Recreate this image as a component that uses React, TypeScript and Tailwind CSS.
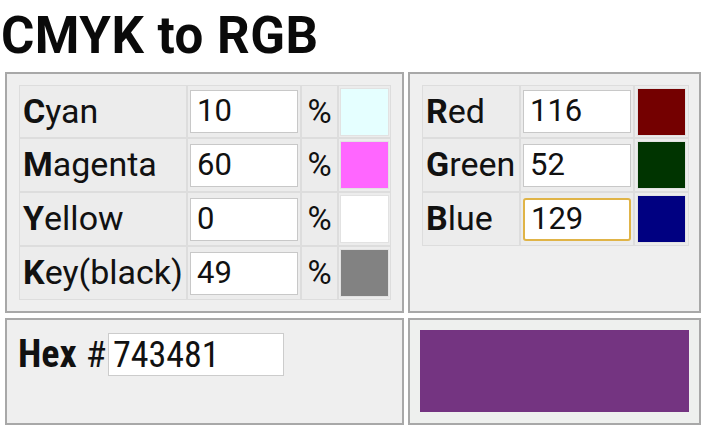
import React from "react";

const cmyk = [
  { first: "C", rest: "yan", value: "10", swatch: "#e5ffff" },
  { first: "M", rest: "agenta", value: "60", swatch: "#ff66ff" },
  { first: "Y", rest: "ellow", value: "0", swatch: "#ffffff" },
  { first: "K", rest: "ey(black)", value: "49", swatch: "#828282" },
];

const rgb = [
  { first: "R", rest: "ed", value: "116", swatch: "#740000", focus: false },
  { first: "G", rest: "reen", value: "52", swatch: "#003400", focus: false },
  { first: "B", rest: "lue", value: "129", swatch: "#000081", focus: true },
];

function Label({ first, rest }: { first: string; rest: string }) {
  return (
    <div className="bg-[#ececec] flex items-center pl-[3px] pb-[2px] text-[34px] leading-none text-[#111]">
      <b className="font-bold">{first}</b>
      {rest}
    </div>
  );
}

function Field({ value, focus }: { value: string; focus?: boolean }) {
  return (
    <div className="bg-[#ececec] flex items-center px-[2px]">
      <input
        readOnly
        value={value}
        className={
          "w-full h-[43px] bg-white px-[6px] text-[31px] text-[#111] outline-none " +
          (focus ? "border-2 border-[#e0b447] rounded-[3px]" : "border border-[#c8c8c8]")
        }
      />
    </div>
  );
}

function Swatch({ color }: { color: string }) {
  return (
    <div className="bg-[#ececec] flex items-center justify-center">
      <div className="w-[49px] h-[48px] border border-[#e2e2e2]" style={{ background: color }} />
    </div>
  );
}

export default function App() {
  return (
    <div className="w-[720px] h-[448px] bg-white" style={{ fontFamily: "Roboto, 'Noto Sans', sans-serif" }}>
      <h1 className="text-[51px] font-bold leading-none pl-[1px] pt-[10px] h-[70px] text-[#0a0a0a] tracking-[0.5px]">
        CMYK to RGB
      </h1>
      <div className="grid grid-cols-[399px_293px] grid-rows-[241px_107px] gap-x-[4px] gap-y-[5px] pl-[5px] pt-[2px]">
        <div className="border-2 border-[#a8a8a8] bg-[#efefef] pt-[11px] pl-[12px]">
          <div className="grid grid-cols-[166px_112px_35px_51px] grid-rows-[51px_52px_52px_52px] gap-[2px] bg-[#dddddd] p-[1px] w-max">
            {cmyk.map((r) => (
              <React.Fragment key={r.first}>
                <Label first={r.first} rest={r.rest} />
                <Field value={r.value} />
                <div className="bg-[#ececec] flex items-center justify-center text-[33px] text-[#111]">%</div>
                <Swatch color={r.swatch} />
              </React.Fragment>
            ))}
          </div>
        </div>
        <div className="border-2 border-[#a8a8a8] bg-[#efefef] pt-[11px] pl-[12px]">
          <div className="grid grid-cols-[96px_112px_53px] grid-rows-[51px_52px_52px] gap-[2px] bg-[#dddddd] p-[1px] w-max">
            {rgb.map((r) => (
              <React.Fragment key={r.first}>
                <Label first={r.first} rest={r.rest} />
                <Field value={r.value} focus={r.focus} />
                <Swatch color={r.swatch} />
              </React.Fragment>
            ))}
          </div>
        </div>
        <div className="border-2 border-[#a8a8a8] bg-[#efefef] pt-[6px] pl-[11px]">
          <div
            className="flex items-center text-[#111]"
            style={{ fontFamily: "'Liberation Sans Narrow', 'Roboto Condensed', Roboto, sans-serif" }}
          >
            <span className="text-[38px] font-bold">Hex</span>
            <span className="text-[37px] ml-[9px] mr-[2px]">#</span>
            <input
              readOnly
              value="743481"
              className="w-[176px] h-[43px] bg-white border border-[#cccccc] px-[4px] text-[36px] text-[#111] outline-none"
            />
          </div>
        </div>
        <div className="border-2 border-[#a8a8a8] bg-[#eef0ee] pt-[10px] pl-[10px]">
          <div className="w-[269px] h-[82px] bg-[#743481]" />
        </div>
      </div>
    </div>
  );
}
